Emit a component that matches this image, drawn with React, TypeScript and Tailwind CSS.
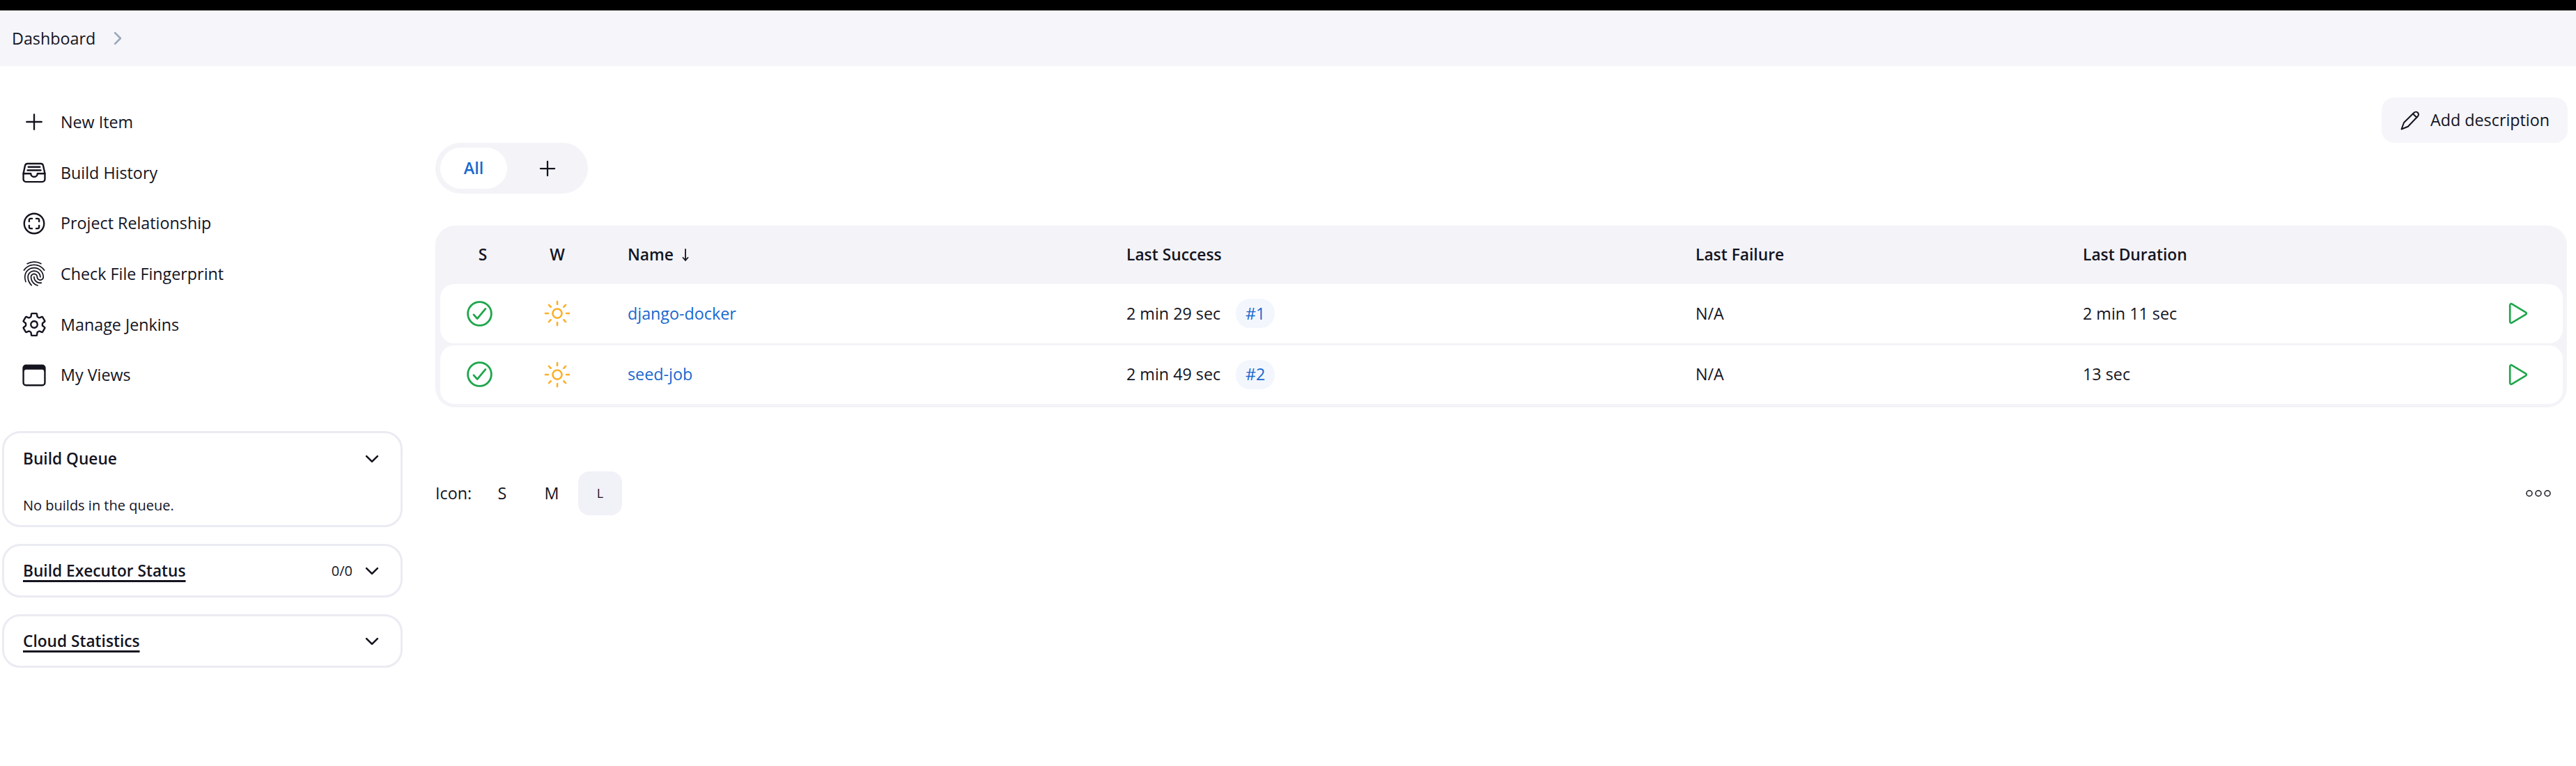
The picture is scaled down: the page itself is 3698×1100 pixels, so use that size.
import React from "react";
import {
  IoAddOutline,
  IoBrowsersOutline,
  IoCheckmarkCircleOutline,
  IoChevronDownOutline,
  IoChevronForwardOutline,
  IoFileTrayFullOutline,
  IoFingerPrintOutline,
  IoPlayOutline,
  IoScanCircleOutline,
  IoSettingsOutline,
  IoSunnyOutline,
} from "react-icons/io5";

const navItems = [
  { icon: <IoAddOutline size={38} />, label: "New Item" },
  { icon: <IoFileTrayFullOutline size={38} />, label: "Build History" },
  { icon: <IoScanCircleOutline size={38} />, label: "Project Relationship" },
  { icon: <IoFingerPrintOutline size={38} />, label: "Check File Fingerprint" },
  { icon: <IoSettingsOutline size={38} />, label: "Manage Jenkins" },
  { icon: <IoBrowsersOutline size={38} />, label: "My Views" },
];

const rows = [
  { name: "django-docker", success: "2 min 29 sec", build: "#1", failure: "N/A", duration: "2 min 11 sec" },
  { name: "seed-job", success: "2 min 49 sec", build: "#2", failure: "N/A", duration: "13 sec" },
];

const gridCols = "grid grid-cols-[112px_112px_761px_817px_556px_1fr_111px] items-center";

function PencilIcon() {
  return (
    <svg width="28" height="28" viewBox="0 0 28 28" fill="none" stroke="currentColor" strokeWidth="2" strokeLinejoin="round" strokeLinecap="round">
      <path d="M1.5 26.5 L5 17 L19.5 2.8 a3.6 3.6 0 0 1 5.4 5.2 L10.8 22.8 Z" />
      <path d="M18 4.5 L23.4 9.8" />
    </svg>
  );
}

function ArrowIcon() {
  return (
    <svg width="10" height="18" viewBox="0 0 10 18" fill="none" stroke="currentColor" strokeWidth="1.8" strokeLinecap="round" strokeLinejoin="round">
      <path d="M5 1 V17 M1.5 13 L5 17 L8.5 13" />
    </svg>
  );
}

function EllipsisIcon() {
  return (
    <svg width="36" height="11" viewBox="0 0 36 11" fill="none" stroke="currentColor" strokeWidth="1.5">
      <circle cx="5" cy="5.5" r="4" />
      <circle cx="18" cy="5.5" r="4" />
      <circle cx="31" cy="5.5" r="4" />
    </svg>
  );
}

function SidePanel({
  title,
  underline,
  count,
  children,
  className,
}: {
  title: string;
  underline?: boolean;
  count?: string;
  children?: React.ReactNode;
  className: string;
}) {
  return (
    <section className={`rounded-[26px] border-[3px] border-[#ebebf3] bg-white pl-[27px] pr-[27px] ${className}`}>
      <div className="flex items-center justify-between">
        <h2 className={`text-[22.7px] font-semibold leading-[30px] ${underline ? "underline decoration-[2.5px] underline-offset-[5px]" : ""}`}>
          {title}
        </h2>
        <div className="flex items-center gap-[14px]">
          {count && <span className="text-[20px] leading-[30px]">{count}</span>}
          <IoChevronDownOutline size={28} />
        </div>
      </div>
      {children}
    </section>
  );
}

export default function App() {
  return (
    <div className="min-h-screen bg-white font-['Open_Sans',sans-serif] text-[#14141f] text-[23.3px]">
      <div className="h-[15px] bg-black" />
      <nav className="flex h-[80px] items-center gap-[18px] bg-[#f5f5fa] pl-[17px]">
        <span>Dashboard</span>
        <IoChevronForwardOutline size={28} className="text-[#9aa7bb]" />
      </nav>

      <div className="flex">
        <aside className="w-[625px] shrink-0 pl-[3px] pr-[47px] pt-[44px]">
          <ul>
            {navItems.map((item) => (
              <li key={item.label} className="flex h-[72.7px] items-center gap-[19px] pl-[27px]">
                {item.icon}
                <span>{item.label}</span>
              </li>
            ))}
          </ul>

          <div className="mt-[44px] flex flex-col gap-[24px]">
            <SidePanel title="Build Queue" className="h-[138px] pt-[22px]">
              <p className="mt-[37px] text-[20px] leading-[30px]">No builds in the queue.</p>
            </SidePanel>
            <SidePanel title="Build Executor Status" count="0/0" underline className="h-[77px] pt-[21px]" />
            <SidePanel title="Cloud Statistics" underline className="h-[77px] pt-[21px]" />
          </div>
        </aside>

        <main className="min-w-0 flex-1 pr-[12px] pt-[45px]">
          <div className="flex justify-end">
            <button className="flex h-[65px] w-[267px] items-center gap-[15px] rounded-[18px] bg-[#f5f5fa] pl-[27px]">
              <PencilIcon />
              <span>Add description</span>
            </button>
          </div>

          <div className="flex h-[73px] w-[219px] items-center rounded-full bg-[#f3f3f8] pl-[7px]">
            <div className="flex h-[59px] w-[96px] items-center justify-center rounded-full bg-white font-semibold text-[#1868cf]">
              All
            </div>
            <div className="flex flex-1 items-center justify-center">
              <IoAddOutline size={36} />
            </div>
          </div>

          <div className="mr-[1px] mt-[46px] rounded-[28px] bg-[#f3f3f8] pb-[5px] pl-[7px] pr-[6px]">
            <div className={`${gridCols} h-[84px] text-[22.8px] font-semibold`}>
              <div className="pl-[10px] text-center">S</div>
              <div className="text-center">W</div>
              <div className="flex items-center gap-[12px] pl-[45px]">
                Name
                <ArrowIcon />
              </div>
              <div>Last Success</div>
              <div>Last Failure</div>
              <div>Last Duration</div>
              <div />
            </div>
            <div className="flex flex-col gap-[3px]">
              {rows.map((r) => (
                <div key={r.name} className={`${gridCols} h-[84.5px] rounded-[20px] bg-white`}>
                  <div className="flex justify-center">
                    <IoCheckmarkCircleOutline size={45} className="text-[#1ea64b]" />
                  </div>
                  <div className="flex justify-center">
                    <IoSunnyOutline size={42} className="text-[#fbb02c]" />
                  </div>
                  <div className="pl-[45px] text-[#1868cf]">{r.name}</div>
                  <div className="flex items-center gap-[22px]">
                    <span>{r.success}</span>
                    <span className="flex h-[42px] w-[56px] items-center justify-center rounded-[20px] bg-[#f3f7fd] text-[#1868cf]">
                      {r.build}
                    </span>
                  </div>
                  <div>{r.failure}</div>
                  <div>{r.duration}</div>
                  <div className="-ml-[17px] flex justify-center">
                    <IoPlayOutline size={42} className="text-[#1ea64b]" />
                  </div>
                </div>
              ))}
            </div>
          </div>

          <div className="mt-[92px] flex h-[63px] items-center">
            <span className="w-[70px]">Icon:</span>
            <span className="w-[52px] text-center">S</span>
            <span className="ml-[19px] w-[52px] text-center">M</span>
            <span className="ml-[12px] flex h-[63px] w-[63px] items-center justify-center rounded-[16px] bg-[#f1f1f8] text-[18px]">
              L
            </span>
            <div className="ml-auto mr-[24px]">
              <EllipsisIcon />
            </div>
          </div>
        </main>
      </div>
    </div>
  );
}
